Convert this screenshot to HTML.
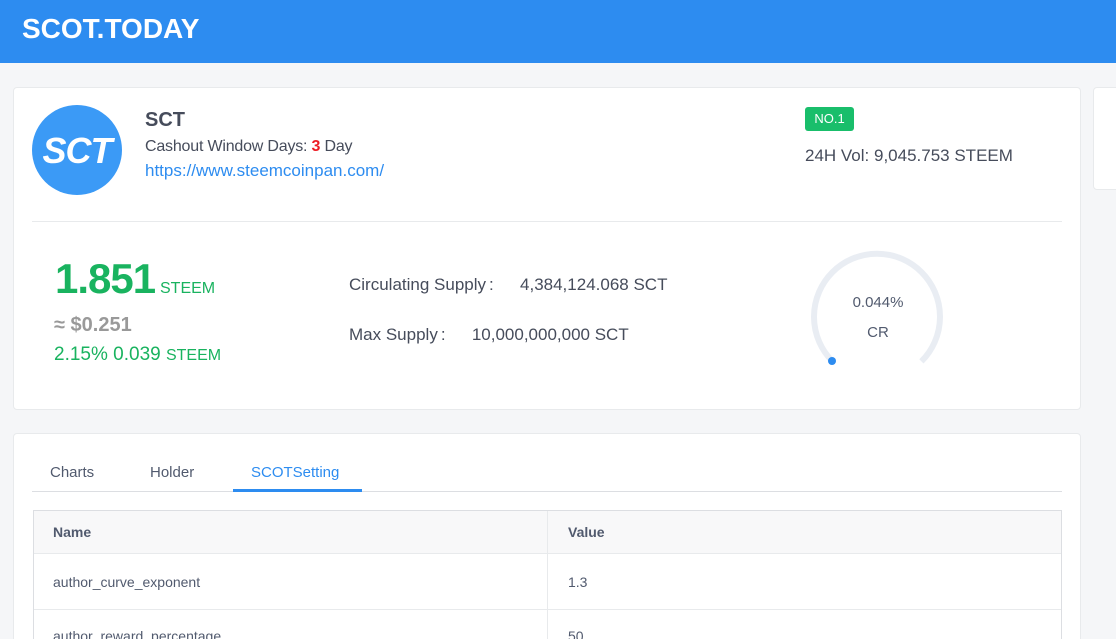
<!DOCTYPE html>
<html><head><meta charset="utf-8"><style>
*{box-sizing:border-box;margin:0;padding:0}
html,body{width:1116px;height:639px;overflow:hidden}
body{background:#f5f6f8;font-family:"Liberation Sans",Arial,sans-serif}
#w{position:relative;width:1116px;height:639px;overflow:hidden}
.hdr{position:absolute;left:0;top:0;width:1116px;height:63px;background:#2d8cf0}
.hdr div{position:absolute;left:22px;top:13px;color:#fff;font-size:28px;font-weight:bold}
.card{position:absolute;background:#fff;border:1px solid #e8eaec;border-radius:4px}
.a{position:absolute;white-space:nowrap}
.c{display:inline-block;width:34px;padding-left:3px;text-align:left}
</style></head><body><div id="w">
<div class="hdr"><div>SCOT.TODAY</div></div>
<div class="card" style="left:13px;top:87px;width:1068px;height:323px"></div>
<div class="card" style="left:1093px;top:87px;width:40px;height:103px"></div>
<div class="a" style="left:32px;top:105px;width:90px;height:90px;border-radius:50%;background:#3b9af6"></div>
<div class="a" style="left:32px;top:130px;width:90px;text-align:center;color:#fff;font-size:36px;font-weight:bold;font-style:italic;letter-spacing:-1px">SCT</div>
<div class="a" style="left:145px;top:109px;font-size:20px;font-weight:bold;color:#464c5b">SCT</div>
<div class="a" style="left:145px;top:138px;font-size:16px;color:#464c5b;letter-spacing:-0.2px">Cashout Window Days: <b style="color:#ed1c24">3</b> Day</div>
<div class="a" style="left:145px;top:161px;font-size:17px;color:#2d8cf0">https://www.steemcoinpan.com/</div>
<div class="a" style="left:805px;top:107px;width:49px;height:24px;background:#19be6b;border-radius:3px;color:#fff;font-size:13px;text-align:center;line-height:24px">NO.1</div>
<div class="a" style="left:805px;top:146px;font-size:17px;color:#464c5b">24H Vol: 9,045.753 STEEM</div>
<div class="a" style="left:32px;top:221px;width:1030px;height:1px;background:#e8eaec"></div>
<div class="a" style="left:55px;top:255px;font-size:42px;font-weight:bold;color:#19b35f;letter-spacing:-1px">1.851</div>
<div class="a" style="left:160px;top:280px;font-size:16px;color:#19b35f">STEEM</div>
<div class="a" style="left:54px;top:314px;font-size:20px;font-weight:bold;color:#999">≈ $0.251</div>
<div class="a" style="left:54px;top:344px;font-size:19px;color:#19b35f">2.15% 0.039 <span style="font-size:16px">STEEM</span></div>
<div class="a" style="left:349px;top:275px;font-size:17px;color:#464c5b">Circulating Supply<span class="c">:</span>4,384,124.068 SCT</div>
<div class="a" style="left:349px;top:325px;font-size:17px;color:#464c5b">Max Supply<span class="c">:</span>10,000,000,000 SCT</div>
<svg class="a" style="left:800px;top:240px" width="160" height="140"><path d="M32.6 121.4 A63 63 0 1 1 121.4 121.4" fill="none" stroke="#e9edf3" stroke-width="6"/><circle cx="32" cy="121" r="4" fill="#2d8cf0"/></svg>
<div class="a" style="left:827px;top:294px;width:102px;text-align:center;font-size:15px;color:#515a6e">0.044%</div>
<div class="a" style="left:827px;top:324px;width:102px;text-align:center;font-size:15px;color:#515a6e">CR</div>
<div class="card" style="left:13px;top:433px;width:1068px;height:260px"></div>
<div class="a" style="left:32px;top:491px;width:1030px;height:1px;background:#dcdee2"></div>
<div class="a" style="left:50px;top:464px;font-size:15px;color:#515a6e">Charts</div>
<div class="a" style="left:150px;top:464px;font-size:15px;color:#515a6e">Holder</div>
<div class="a" style="left:251px;top:464px;font-size:15px;color:#2d8cf0">SCOTSetting</div>
<div class="a" style="left:233px;top:489px;width:129px;height:3px;background:#2d8cf0"></div>
<div class="a" style="left:33px;top:510px;width:1029px;height:200px;border:1px solid #dcdee2;background:#fff"></div>
<div class="a" style="left:34px;top:511px;width:1027px;height:43px;background:#f8f8f9;border-bottom:1px solid #e8eaec"></div>
<div class="a" style="left:547px;top:511px;width:1px;height:190px;background:#e8eaec"></div>
<div class="a" style="left:34px;top:609px;width:1027px;height:1px;background:#e8eaec"></div>
<div class="a" style="left:53px;top:524px;font-size:14px;font-weight:bold;color:#515a6e">Name</div>
<div class="a" style="left:568px;top:524px;font-size:14px;font-weight:bold;color:#515a6e">Value</div>
<div class="a" style="left:53px;top:574px;font-size:14px;color:#515a6e">author_curve_exponent</div>
<div class="a" style="left:568px;top:574px;font-size:14px;color:#515a6e">1.3</div>
<div class="a" style="left:53px;top:628px;font-size:14px;color:#515a6e">author_reward_percentage</div>
<div class="a" style="left:568px;top:628px;font-size:14px;color:#515a6e">50</div>
</div></body></html>
